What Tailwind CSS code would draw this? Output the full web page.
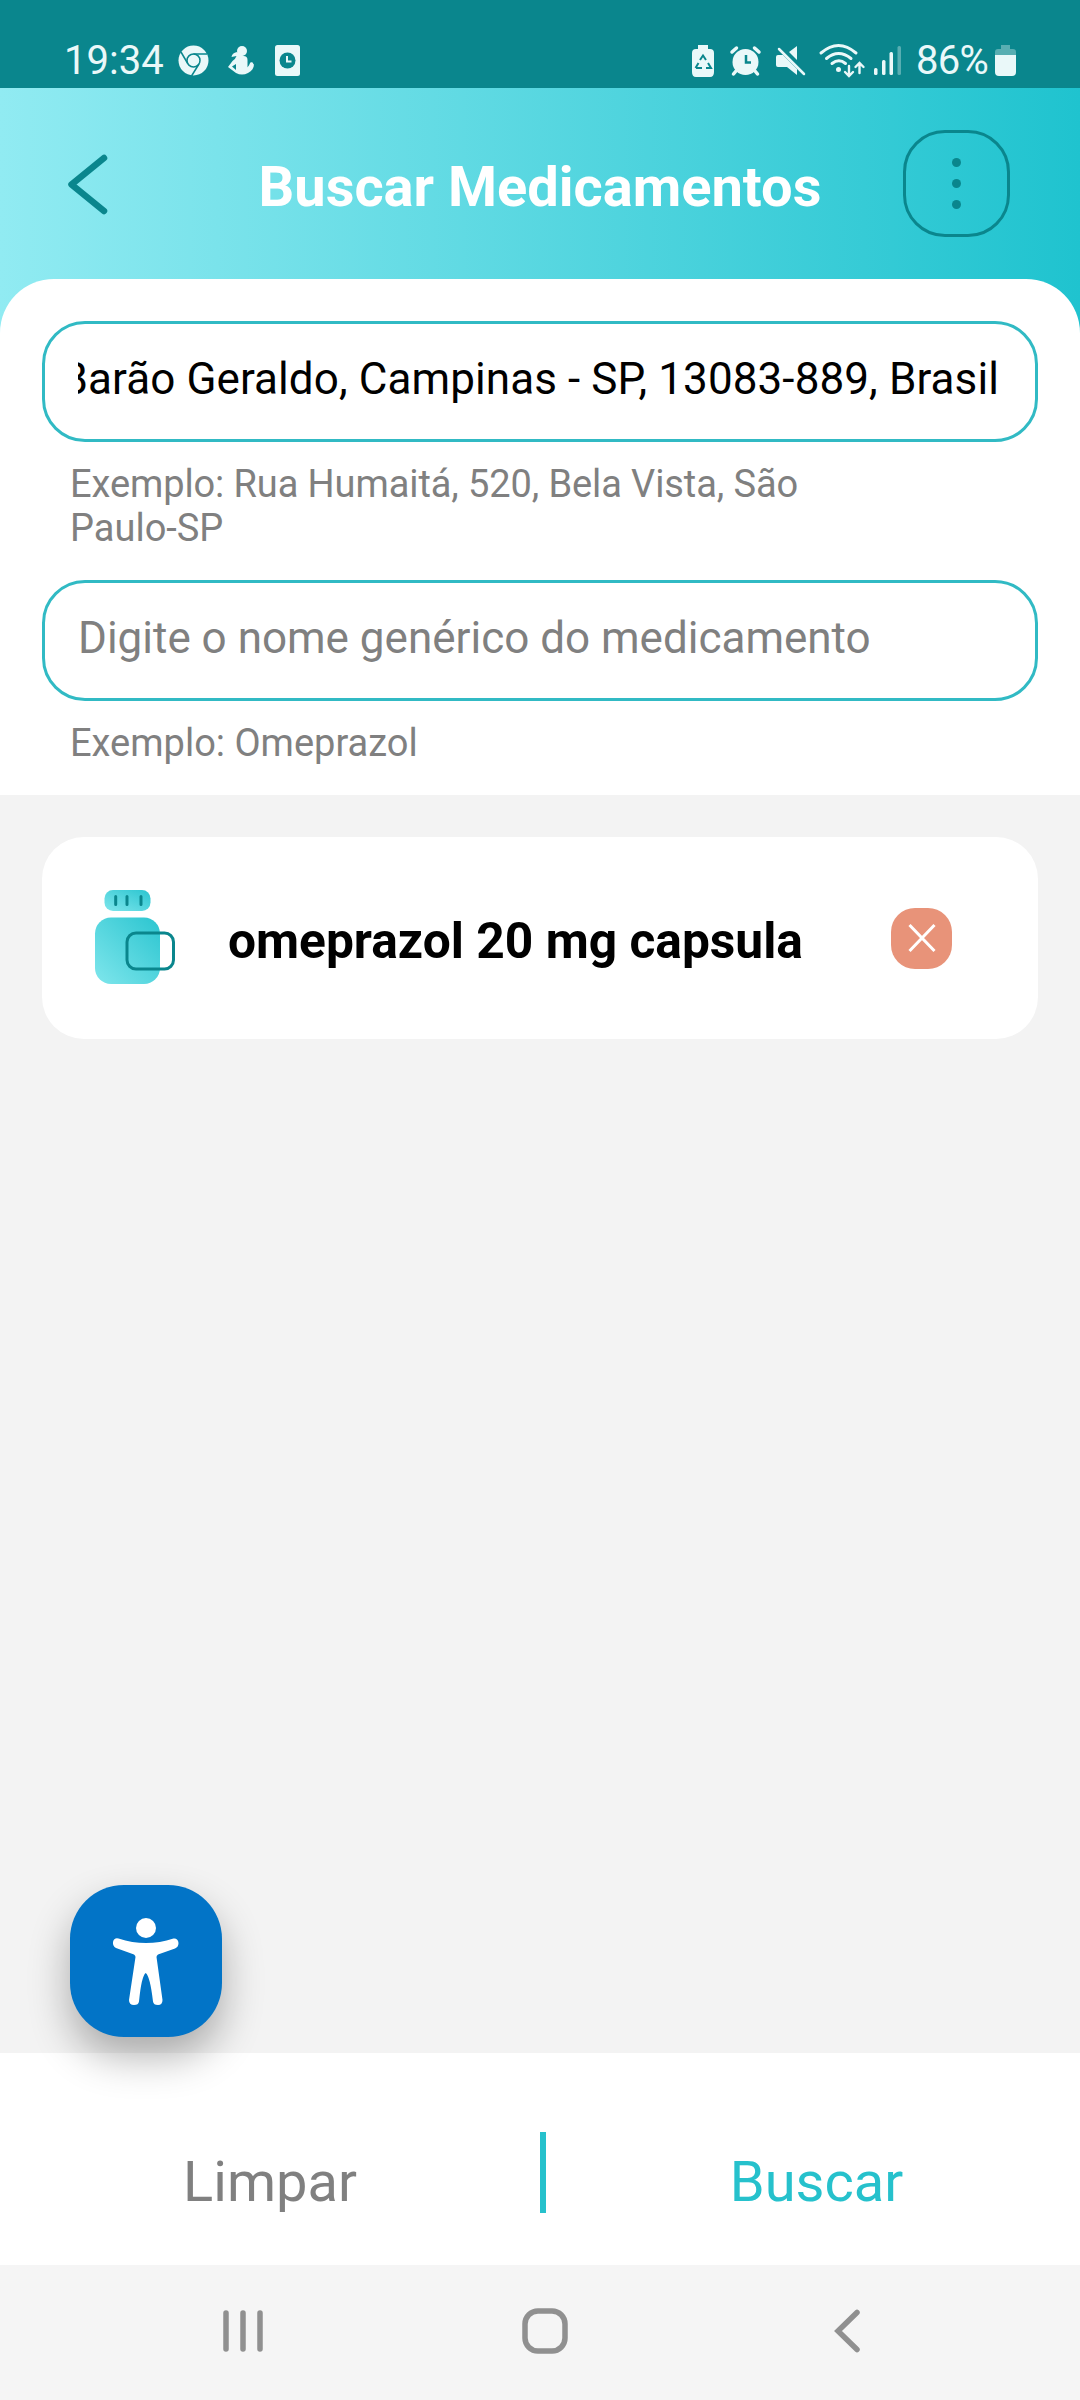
<!DOCTYPE html>
<html lang="pt-BR">
<head>
<meta charset="utf-8">
<title>Buscar Medicamentos</title>
<script src="https://cdn.jsdelivr.net/npm/@tailwindcss/browser@4"></script>
</head>
<body class="w-[1080px] h-[2400px] overflow-hidden bg-[#f3f3f3] font-['Roboto',sans-serif]">
<div class="flex flex-col h-[2400px] relative">
  <header class="h-[88px] shrink-0 bg-[#0a868d] text-[#eaf8f9] flex">
    <svg class="w-[360px] h-[88px]" viewBox="0 0 360 88" fill="currentColor">
      <text x="64" y="74" font-size="40">19:34</text>
      <circle cx="193.500" cy="60.500" r="15"/>
      <g fill="none" stroke="#0a868d" stroke-width="1.500"><circle cx="193.500" cy="60.500" r="6.500"/><path d="M193.500 54h13.500M188 64l-7-12M199 64l-7.500 12"/></g>
      <circle cx="242" cy="51" r="5"/>
      <path d="M237 52q-5 1-5.500 5l5-1q-1 3-4 5l-4.500 6 8 6q6 3 12 0c4-2 6-5 6-9l-3 1q0 3-3.500 4V60q0-4-4-4zM236 64v6l-4-3.500z" fill-rule="evenodd"/>
      <path d="M245 70q5-1 6.500-6" fill="none" stroke="currentColor" stroke-width="3.500" stroke-linecap="round"/>
      <rect x="275" y="45" width="25" height="31" rx="2.500"/>
      <circle cx="287.500" cy="60.500" r="8" fill="#0a868d"/>
      <path d="M287 56v5.500h4.500" fill="none" stroke="currentColor" stroke-width="2"/>
    </svg>
    <svg class="w-[420px] h-[88px] ml-auto" viewBox="660 0 420 88" fill="currentColor">
      <path d="M698 45h10v4h2q4 0 4 4v19q0 5-4 5h-14q-4 0-4-5V53q0-4 4-4h2z"/>
      <path d="M700 60l3-4.500 3 4.500M708 63l3 5h-5M695.500 68l3-5M702 68h-6" fill="none" stroke="#0a868d" stroke-width="2"/>
      <circle cx="745.500" cy="62" r="13"/>
      <path d="M732 52l4.500-4M759 52l-4.500-4M736 71l-2.500 3M755 71l2.500 3" fill="none" stroke="currentColor" stroke-width="3.500" stroke-linecap="round"/>
      <path d="M746 55v7.500h5" fill="none" stroke="#0a868d" stroke-width="2.500"/>
      <path d="M797 46v14l-8-8zM776 57q0-2 2-2h5l14 14v6l-10-8h-9q-2 0-2-2z"/>
      <path d="M779 49l25 25" fill="none" stroke="currentColor" stroke-width="2.500" stroke-linecap="round"/>
      <g fill="none" stroke="currentColor" stroke-width="3" stroke-linecap="round"><path d="M821 53q17.500-15 35 0M826.500 58.500q12-10 24.500 0M832 63.500q7-5.500 13.500 0"/><path d="M849 66v9.500m-4-3.500l4 4 4-4M859.500 73v-9.500m-4 3.500l4-4 4 4" stroke-width="2.400"/></g>
      <circle cx="838.500" cy="69.500" r="2.500"/>
      <rect x="874" y="68" width="3.500" height="7" rx="1.500"/><rect x="882" y="60" width="3.500" height="15" rx="1.500"/><rect x="889.500" y="52" width="3.500" height="23" rx="1.500"/><rect x="897.500" y="46" width="3.500" height="29" rx="1.500" opacity=".35"/>
      <text x="916" y="74" font-size="40" letter-spacing="-0.700">86%</text>
      <path d="M1001 45h9v4h3q3 0 3 3v4h-21v-4q0-3 3-3h3z" opacity=".35"/>
      <path d="M995 55h21v17q0 4-4 4h-13q-4 0-4-4z"/>
    </svg>
  </header>

  <main class="flex-1 flex flex-col">
    <section class="bg-[linear-gradient(to_right,#91ebf2,#1fc3cf)]">
      <div class="h-[191px] flex items-center">
        <svg class="w-[60px] h-[80px] ml-[60px] mt-px" viewBox="60 144 60 80" fill="none" stroke="#0a868d" stroke-width="6.500" stroke-linecap="round" stroke-linejoin="round"><path d="M104 158L71.500 184.500 104 211"/></svg>
        <h1 class="w-[783px] text-center text-white font-bold text-[56px] leading-[66px] pl-[57px] -mb-[6px] whitespace-nowrap">Buscar Medicamentos</h1>
        <button class="w-[107px] h-[107px] rounded-[42px] border-[3px] border-[#0a868d] flex flex-col items-center justify-center gap-[12px] mb-px">
          <i class="size-[9px] rounded-full bg-[#0a868d]"></i><i class="size-[9px] rounded-full bg-[#0a868d]"></i><i class="size-[9px] rounded-full bg-[#0a868d]"></i>
        </button>
      </div>
      <div class="bg-white rounded-t-[54px] h-[516px] pt-[42px] px-[42px]">
        <div class="h-[121px] rounded-[43px] border-[3px] border-[#31bac4] px-[33px] flex items-center">
          <div class="w-full overflow-hidden flex justify-end whitespace-nowrap text-[44px] leading-[52px] tracking-[0.1px] text-black -mt-[6px] pr-[3px]">Barão Geraldo, Campinas - SP, 13083-889, Brasil</div>
        </div>
        <p class="pl-[28px] pt-[20px] text-[38px] leading-[44px] text-[#808080]"><span class="tracking-[-0.1px]">Exemplo: Rua Humaitá, 520, Bela Vista, São</span><br>Paulo-SP</p>
        <div class="mt-[30px] h-[121px] rounded-[43px] border-[3px] border-[#31bac4] px-[33px] flex items-center">
          <div class="whitespace-nowrap text-[44px] leading-[52px] text-[#808080] -mt-[6px]">Digite o nome genérico do medicamento</div>
        </div>
        <p class="pl-[28px] pt-[20px] text-[38px] leading-[44px] text-[#808080]">Exemplo: Omeprazol</p>
      </div>
    </section>

    <section class="px-[42px] pt-[42px]">
      <article class="h-[202px] rounded-[42px] bg-white flex items-center">
        <svg class="w-[100px] h-[110px] ml-[43px] shrink-0" viewBox="85 883 100 110">
          <defs><linearGradient id="g" x1="0" y1="1" x2="1" y2="0"><stop offset="0" stop-color="#7fe6ec"/><stop offset="1" stop-color="#2bc5d0"/></linearGradient></defs>
          <rect x="104.500" y="890" width="46" height="21" rx="8.500" fill="url(#g)"/>
          <rect x="95" y="917.500" width="65" height="66.500" rx="16" fill="url(#g)"/>
          <g fill="none" stroke="#0a868d" stroke-width="3" stroke-linecap="round"><path d="M115.700 896.500v8M127 896.500v8M141 896.500v8"/><rect x="127" y="933" width="46.500" height="36" rx="9"/></g>
        </svg>
        <h2 class="ml-[43px] w-[661px] font-bold text-[49.700px] leading-[60px] text-black whitespace-nowrap mt-[5px]">omeprazol 20 mg capsula</h2>
        <button class="size-[61px] rounded-[24px] bg-[#e89379] flex items-center justify-center ml-[2px]">
          <svg class="w-[30px] h-[30px]" viewBox="0 0 30 30" fill="none" stroke="#fff" stroke-width="3"><path d="M2.500 2L27.500 28M27.500 2L2.500 28"/></svg>
        </button>
      </article>
    </section>
  </main>

  <button class="absolute left-[70px] top-[1885px] size-[152px] rounded-[54px] bg-[#0274c7] shadow-[0_20px_40px_rgba(0,0,0,0.3)]">
    <svg class="w-[152px] h-[152px]" viewBox="70 1885 152 152" fill="#fff">
      <circle cx="146" cy="1928" r="10"/>
      <path d="M118.500 1938.500Q146 1947.500 173.500 1938.500Q178 1938 178.500 1943Q178.500 1947 175 1948.500L158 1954.500Q156.500 1955.500 156.500 1957L162.500 2000Q162.500 2005 158 2005Q153.500 2005 153 2001.500Q150 1976 145.700 1973Q141.500 1976 139 2001.500Q138.500 2005 134 2005Q129 2005 129 2000L135.500 1957Q135.500 1955.500 134 1954.500L116 1948Q112.500 1946 113 1942Q114 1937.500 118.500 1938.500Z"/>
    </svg>
  </button>

  <footer class="h-[212px] shrink-0 bg-white flex items-start text-[56px] leading-[66px]">
    <button class="w-[540px] text-center text-[#808080] pt-[96px]">Limpar</button>
    <div class="w-[6px] h-[81px] bg-[#26c1cc] mt-[79px]"></div>
    <button class="flex-1 text-center text-[#26c1cc] pt-[96px] pl-[7px]">Buscar</button>
  </footer>
  <nav class="h-[135px] shrink-0 bg-[#f5f5f5]">
    <svg class="w-[1080px] h-[135px]" viewBox="0 2265 1080 135" fill="none" stroke="#909090" stroke-width="5.500" stroke-linecap="round">
      <path d="M226 2313v36M243 2313v36M260 2313v36"/>
      <rect x="525" y="2311" width="40" height="40" rx="13"/>
      <path d="M857 2312.500L838 2331l19 18.500" stroke-linejoin="miter"/>
    </svg>
  </nav>
</div>
</body>
</html>
